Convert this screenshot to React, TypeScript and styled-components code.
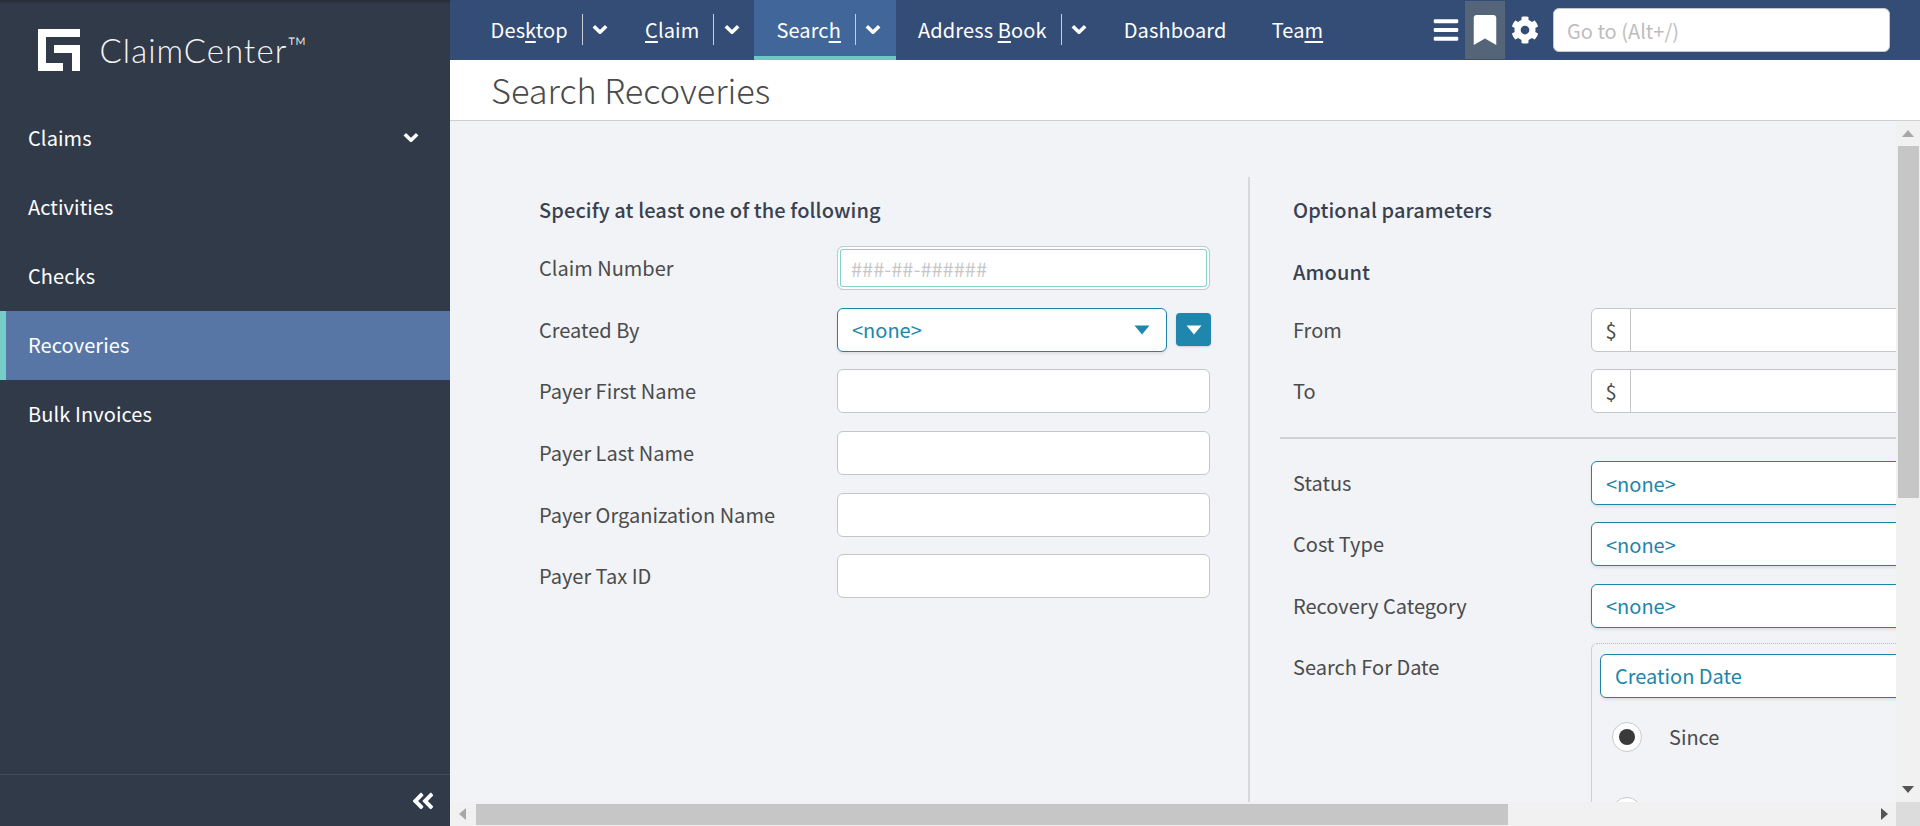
import React from "react";
import styled, { createGlobalStyle } from "styled-components";
import { FaBars, FaBookmark, FaCog, FaAngleDoubleLeft } from "react-icons/fa";

const font = `"Noto Sans CJK SC", "Noto Sans", sans-serif`;

const Global = createGlobalStyle`
  html, body { margin: 0; height: 100%; overflow: hidden; }
  body { font-family: ${font}; font-size: 20px; background: #f1f3f7; }
  #root { height: 100%; }
  * { box-sizing: border-box; }
`;

const Page = styled.div`
  display: grid;
  grid-template-columns: 450px minmax(0, 1fr);
  grid-template-rows: 826px;
  width: 1920px;
  height: 826px;
  overflow: hidden;
`;

const Sidebar = styled.aside`
  display: flex;
  flex-direction: column;
  min-height: 0;
  background: linear-gradient(#262c37 0, #313a49 4px);
  color: #fff;
`;

const Brand = styled.div`
  display: flex;
  align-items: flex-start;
  flex: 0 0 104px;
  padding: 29px 0 0 38px;
  gap: 19.5px;
`;

const BrandName = styled.div`
  font-family: "Lato", sans-serif;
  font-weight: 300;
  font-size: 33px;
  line-height: 42px;
  letter-spacing: 1.05px;
  color: #f4f5f6;
  sup { font-size: 26px; line-height: 0; vertical-align: 7px; letter-spacing: 0; }
`;

const SideNav = styled.nav`
  flex: 1;
`;

const SideItem = styled.div<{ $active?: boolean }>`
  display: flex;
  align-items: center;
  justify-content: space-between;
  height: 69px;
  padding: 0 31px 2px ${(p) => (p.$active ? 22 : 28)}px;
  font-size: 20px;
  letter-spacing: 0.1px;
  color: #fff;
  background: ${(p) => (p.$active ? "#5776a6" : "transparent")};
  border-left: ${(p) => (p.$active ? "6px solid #74cdc7" : "none")};
`;

const SideFoot = styled.div`
  display: flex;
  align-items: center;
  justify-content: flex-end;
  flex: 0 0 52px;
  padding: 0 14px 0 0;
  border-top: 1px solid #434c5b;
  font-size: 26px;
`;

const Main = styled.main`
  display: flex;
  flex-direction: column;
  min-width: 0;
  min-height: 0;
`;

const TopBar = styled.header`
  display: flex;
  align-items: stretch;
  flex: 0 0 60px;
  padding-left: 18px;
  background: #334d76;
  color: #fff;
`;

const Tab = styled.div<{ $active?: boolean }>`
  display: flex;
  align-items: center;
  height: 60px;
  padding: 3px 22.6px 0;
  font-size: 20px;
  letter-spacing: 0.1px;
  line-height: 28px;
  background: ${(p) => (p.$active ? "#41669a" : "transparent")};
  border-bottom: 4px solid ${(p) => (p.$active ? "#6ac9c4" : "transparent")};
  u { text-underline-offset: 3px; text-decoration-thickness: 1.5px; }
`;

const TabMenu = styled.span`
  display: flex;
  align-items: center;
  justify-content: center;
  width: 36px;
  height: 31px;
  margin: 0 -18px 0 14px;
  border-left: 1.5px solid #c9ced6;
`;

const Tools = styled.div`
  display: flex;
  align-items: center;
  margin-left: auto;
  padding-right: 30px;
`;

const IconBtn = styled.span<{ $active?: boolean; $size: number }>`
  display: flex;
  align-items: center;
  justify-content: center;
  width: ${(p) => (p.$active ? 40 : 28)}px;
  height: 58px;
  margin: ${(p) => (p.$active ? "0 6px 0 5px" : "0")};
  font-size: ${(p) => p.$size}px;
  background: ${(p) => (p.$active ? "#546479" : "transparent")};
`;

const GoTo = styled.input`
  width: 337px;
  height: 44px;
  margin-left: 14px;
  padding: 0 13px;
  border: 1px solid #c4c8ce;
  border-radius: 6px;
  background: #fff;
  font: 20px ${font};
  outline: none;
  &::placeholder { color: #bdbdbd; opacity: 1; }
`;

const TitleBar = styled.div`
  flex: 0 0 61px;
  padding: 0 0 0 41px;
  background: #fff;
  border-bottom: 1px solid #cfcfcf;
`;

const Title = styled.h1`
  margin: 0;
  font-size: 34.3px;
  font-weight: 200;
  line-height: 58px;
  color: #4a4a4a;
`;

const Viewport = styled.div`
  flex: 1;
  min-height: 0;
  display: grid;
  grid-template-columns: minmax(0, 1fr) 24px;
  grid-template-rows: minmax(0, 1fr) 24px;
`;

const Scroller = styled.div`
  overflow: hidden;
  min-width: 0;
  min-height: 0;
`;

const Columns = styled.div`
  display: flex;
  width: 1953px;
  height: 1232px;
  padding-top: 56px;
  font-size: 20px;
  color: #4b4b4b;
`;

const LeftPanel = styled.section`
  flex: 0 0 798px;
  padding: 20px 0 0 89px;
`;

const RightPanel = styled.section`
  flex: 1;
  padding: 20px 0 0 43px;
  border-left: 2px solid #d6d8dc;
`;

const Heading = styled.h2`
  margin: 0 0 23px;
  font-size: 20px;
  line-height: 26px;
  font-weight: 500;
  letter-spacing: 0.1px;
  color: #384150;
`;

const SubHeading = styled(Heading)`
  margin: 36px 0 23px;
`;

const Row = styled.div<{ $gap?: number }>`
  display: flex;
  align-items: center;
  min-height: 44px;
  margin-bottom: ${(p) => p.$gap ?? 17.7}px;
`;

const DateRow = styled(Row)`
  align-items: flex-start;
  margin-top: -2px;
`;

const Label = styled.label<{ $top?: boolean }>`
  flex: 0 0 298px;
  line-height: 24px;
  margin-top: ${(p) => (p.$top ? 12 : 0)}px;
`;

const TextInput = styled.input<{ $focus?: boolean }>`
  width: 373px;
  height: 44px;
  padding: 0 13px;
  border: 1px solid #c4c6ca;
  border-radius: 6px;
  background: #fff;
  font: 20px ${font};
  outline: none;
  box-shadow: ${(p) => (p.$focus ? "inset 0 0 0 2px #fff, inset 0 0 0 3px #86d2cd" : "none")};
  &::placeholder { color: #c6c6c6; opacity: 1; }
`;

const Select = styled.div<{ $width: number }>`
  display: flex;
  align-items: center;
  justify-content: space-between;
  flex: 0 0 auto;
  width: ${(p) => p.$width}px;
  height: 44px;
  padding: 0 16px 0 14px;
  border: 1px solid #2083a9;
  border-radius: 6px;
  background: #fff;
  color: #2185ab;
  font-size: 20px;
  box-shadow: 0 2px 3px rgba(0, 0, 0, 0.08);
`;

const PickerBtn = styled.span`
  display: flex;
  align-items: center;
  justify-content: center;
  width: 35px;
  height: 33px;
  margin-left: 9px;
  border-radius: 4px;
  background: #1f86ad;
  box-shadow: 0 1px 2px rgba(0, 0, 0, 0.15);
`;

const Money = styled.div`
  display: flex;
  flex: 0 0 auto;
  width: 372px;
  height: 44px;
  border: 1px solid #c4c6ca;
  border-radius: 6px;
  background: #fff;
`;

const Prefix = styled.span`
  display: flex;
  align-items: center;
  justify-content: center;
  width: 39px;
  border-right: 1px solid #c4c6ca;
  color: #4b4b4b;
`;

const Rule = styled.hr`
  height: 2px;
  margin: 24px 0 22px -13px;
  border: 0;
  background: #cfd1d4;
`;

const DateBox = styled.div`
  flex: 0 0 auto;
  width: 372px;
  padding: 10px 0 0 8px;
  border-left: 1px solid #ced0d4;
  border-top: 1px dotted #b9bbbf;
  border-top-left-radius: 6px;
`;

const RadioRow = styled.div`
  display: flex;
  align-items: center;
  height: 30px;
  margin-top: 24px;
  padding-left: 12px;
  gap: 27px;
  color: #4b4b4b;
  & + & { margin-top: 45px; }
`;

const Radio = styled.span<{ $on?: boolean }>`
  display: flex;
  align-items: center;
  justify-content: center;
  width: 30px;
  height: 30px;
  border: 1px solid #c9c9c9;
  border-radius: 50%;
  background: #fff;
  &::after {
    content: "";
    display: ${(p) => (p.$on ? "block" : "none")};
    width: 16px;
    height: 16px;
    border-radius: 50%;
    background: #3a3a3a;
  }
`;

const VTrack = styled.div`
  display: flex;
  flex-direction: column;
  align-items: center;
  background: #f1f1f1;
`;

const HTrack = styled.div`
  display: flex;
  align-items: center;
  background: #f1f1f1;
`;

const VThumb = styled.div`
  width: 21px;
  height: 352px;
  background: #c6c6c6;
`;

const HThumb = styled.div`
  width: 1032px;
  height: 21px;
  margin-top: 1px;
  background: #c6c6c6;
`;

const Corner = styled.div`
  background: #dcdcdc;
`;

const Arrow = styled.span<{ $dir: "up" | "down" | "left" | "right"; $dark?: boolean }>`
  flex: 0 0 auto;
  width: 0;
  height: 0;
  border-style: solid;
  border-color: transparent;
  ${(p) => {
    const c = p.$dark ? "#555" : "#a8a8a8";
    if (p.$dir === "up") return `border-width:0 6px 7px;border-bottom-color:${c};margin:9px 0;`;
    if (p.$dir === "down") return `border-width:7px 6px 0;border-top-color:${c};margin:auto 0 9px;`;
    if (p.$dir === "left") return `border-width:6px 7px 6px 0;border-right-color:${c};margin:0 9.5px 0 9px;`;
    return `border-width:6px 0 6px 7px;border-left-color:${c};margin:0 8px 0 auto;`;
  }}
`;

const Logo = () => (
  <svg width="42" height="42" viewBox="0 0 42 42" fill="#fff" aria-hidden="true">
    <path d="M0 0H42V8H8V34H25V42H0Z" />
    <path d="M16 16H42V42H34V24H16Z" />
  </svg>
);

const Chevron = () => (
  <svg width="16" height="11" viewBox="0 0 16 11" fill="none" stroke="#fff" strokeWidth="3.6" strokeLinejoin="round" aria-hidden="true">
    <path d="M1.8 2.2L8 8.2L14.2 2.2" />
  </svg>
);

const Caret = ({ color }: { color: string }) => (
  <svg width="16" height="10" viewBox="0 0 16 10" fill={color} aria-hidden="true">
    <path d="M0.5 0.5H15.5L8 9.5Z" />
  </svg>
);

const tabs: { key: string; label: React.ReactNode; menu?: boolean; active?: boolean }[] = [
  { key: "d", label: <>Des<u>k</u>top</>, menu: true },
  { key: "c", label: <><u>C</u>laim</>, menu: true },
  { key: "s", label: <>Searc<u>h</u></>, menu: true, active: true },
  { key: "a", label: <>Address <u>B</u>ook</>, menu: true },
  { key: "b", label: "Dashboard" },
  { key: "t", label: <>Tea<u>m</u></> },
];

const leftRows = ["Payer First Name", "Payer Last Name", "Payer Organization Name", "Payer Tax ID"];
const rightGap = 17.2;

export default function App() {
  return (
    <Page>
      <Global />
      <Sidebar>
        <Brand>
          <Logo />
          <BrandName>ClaimCenter<sup>™</sup></BrandName>
        </Brand>
        <SideNav>
          <SideItem>Claims <Chevron /></SideItem>
          <SideItem>Activities</SideItem>
          <SideItem>Checks</SideItem>
          <SideItem $active>Recoveries</SideItem>
          <SideItem>Bulk Invoices</SideItem>
        </SideNav>
        <SideFoot><FaAngleDoubleLeft /></SideFoot>
      </Sidebar>
      <Main>
        <TopBar>
          {tabs.map((t) => (
            <Tab key={t.key} $active={t.active}>
              <span>{t.label}</span>
              {t.menu && <TabMenu><Chevron /></TabMenu>}
            </Tab>
          ))}
          <Tools>
            <IconBtn $size={28}><FaBars /></IconBtn>
            <IconBtn $active $size={30}><FaBookmark /></IconBtn>
            <IconBtn $size={30}><FaCog /></IconBtn>
            <GoTo placeholder="Go to (Alt+/)" />
          </Tools>
        </TopBar>
        <TitleBar><Title>Search Recoveries</Title></TitleBar>
        <Viewport>
          <Scroller>
            <Columns>
              <LeftPanel>
                <Heading>Specify at least one of the following</Heading>
                <Row>
                  <Label>Claim Number</Label>
                  <TextInput $focus placeholder="###-##-######" />
                </Row>
                <Row>
                  <Label>Created By</Label>
                  <Select $width={330}>&lt;none&gt;<Caret color="#1f86ad" /></Select>
                  <PickerBtn><Caret color="#fff" /></PickerBtn>
                </Row>
                {leftRows.map((l) => (
                  <Row key={l}>
                    <Label>{l}</Label>
                    <TextInput />
                  </Row>
                ))}
              </LeftPanel>
              <RightPanel>
                <Heading>Optional parameters</Heading>
                <SubHeading>Amount</SubHeading>
                <Row $gap={rightGap}><Label>From</Label><Money><Prefix>$</Prefix></Money></Row>
                <Row $gap={rightGap}><Label>To</Label><Money><Prefix>$</Prefix></Money></Row>
                <Rule />
                <Row $gap={rightGap}><Label>Status</Label><Select $width={372}>&lt;none&gt;</Select></Row>
                <Row $gap={rightGap}><Label>Cost Type</Label><Select $width={372}>&lt;none&gt;</Select></Row>
                <Row $gap={rightGap}><Label>Recovery Category</Label><Select $width={372}>&lt;none&gt;</Select></Row>
                <DateRow>
                  <Label $top>Search For Date</Label>
                  <DateBox>
                    <Select $width={350}>Creation Date</Select>
                    <RadioRow><Radio $on />Since</RadioRow>
                    <RadioRow><Radio /></RadioRow>
                  </DateBox>
                </DateRow>
              </RightPanel>
            </Columns>
          </Scroller>
          <VTrack>
            <Arrow $dir="up" />
            <VThumb />
            <Arrow $dir="down" $dark />
          </VTrack>
          <HTrack>
            <Arrow $dir="left" />
            <HThumb />
            <Arrow $dir="right" $dark />
          </HTrack>
          <Corner />
        </Viewport>
      </Main>
    </Page>
  );
}
